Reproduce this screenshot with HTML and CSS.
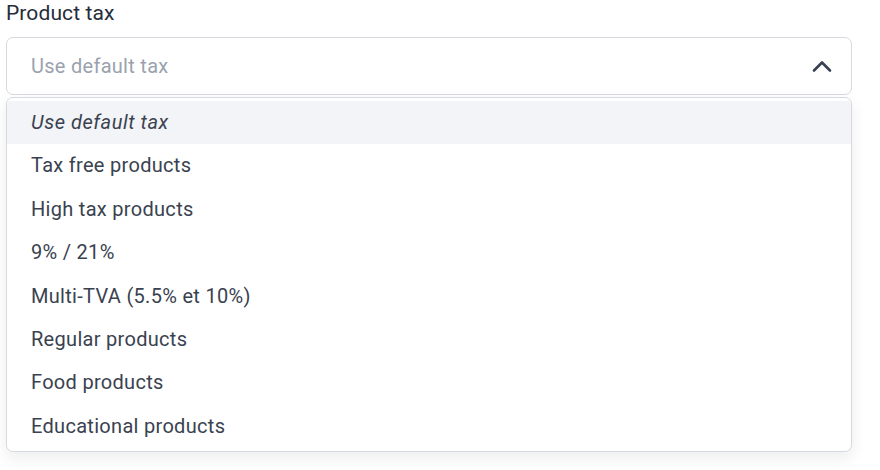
FILE: index.html
```html
<!DOCTYPE html>
<html lang="en">
<head>
<meta charset="utf-8">
<title>Product tax</title>
<link rel="stylesheet" href="styles.css">
</head>
<body>
<div class="field">
  <label class="field-label">Product tax</label>
  <div class="select">
    <div class="select-control">
      <span class="select-placeholder">Use default tax</span>
      <svg class="chevron" width="22" height="14" viewBox="0 0 22 14" aria-hidden="true">
        <polyline points="3,11.5 11,3.5 19,11.5" fill="none" stroke="#374151" stroke-width="2.6" stroke-linecap="round" stroke-linejoin="round"/>
      </svg>
    </div>
    <ul class="select-menu">
      <li class="option option-default option-active">Use default tax</li>
      <li class="option">Tax free products</li>
      <li class="option">High tax products</li>
      <li class="option">9% / 21%</li>
      <li class="option">Multi-TVA (5.5% et 10%)</li>
      <li class="option">Regular products</li>
      <li class="option">Food products</li>
      <li class="option">Educational products</li>
    </ul>
  </div>
</div>
</body>
</html>
```
FILE: styles.css
```css
html, body {
  margin: 0;
  padding: 0;
  background: #ffffff;
}

body {
  min-height: 470px;
  font-family: Roboto, "Liberation Sans", Arial, sans-serif;
  color: #374151;
}

.field {
  width: 846px;
  min-height: 469px;
  margin-left: 6px;
  padding-top: 1px;
}

.field-label {
  display: block;
  font-size: 21px;
  line-height: 25px;
  letter-spacing: 0.1px;
  color: #252d3a;
  margin-bottom: 11px;
}

.select {
  position: relative;
}

.select-control {
  display: flex;
  align-items: center;
  justify-content: space-between;
  height: 58px;
  box-sizing: border-box;
  border: 1px solid #d6d9de;
  border-radius: 7px;
  padding: 0 18px 0 24px;
  background: #ffffff;
}

.select-placeholder {
  font-size: 20px;
  line-height: 24px;
  letter-spacing: 0.28px;
  color: #9aa2ae;
}

.chevron {
  display: block;
}

.select-menu {
  position: absolute;
  left: 0;
  right: 0;
  top: calc(100% + 2px);
  margin: 0;
  padding: 3px 0;
  list-style: none;
  background: #ffffff;
  border: 1px solid #d6d9de;
  border-radius: 7px;
  box-shadow: 0 6px 16px rgba(17, 24, 39, 0.08);
  z-index: 10;
}

.option {
  padding: 0 24px;
  font-size: 20px;
  line-height: 43.375px;
  letter-spacing: 0.3px;
  color: #3a4250;
}

.option-default {
  font-style: italic;
  letter-spacing: 0.55px;
}

.option-active {
  background: #f3f4f7;
}
```
